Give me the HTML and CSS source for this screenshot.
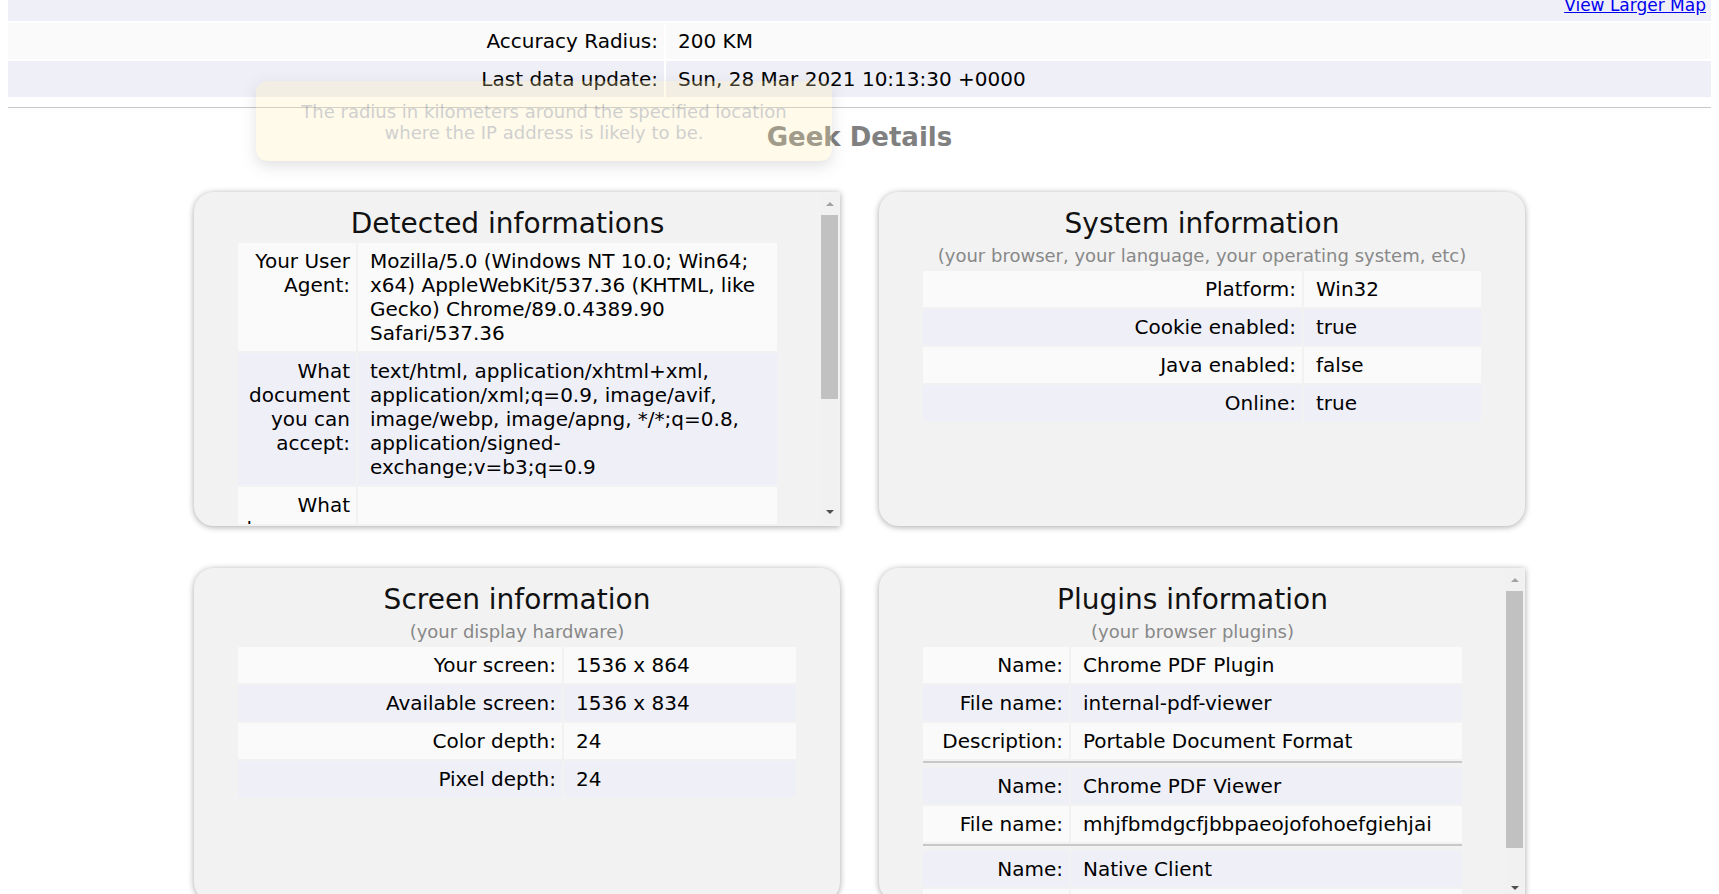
FILE: index.html
```html
<!DOCTYPE html>
<html lang="en">
<head>
<meta charset="utf-8">
<title>Geek Details</title>
<link rel="stylesheet" href="styles.css">
</head>
<body>
<div class="map-band"><a href="#" class="map-link">View Larger Map</a></div>
<table class="info-table top-table">
  <tr class="light"><th class="w-top">Accuracy Radius:</th><td>200 KM</td></tr>
  <tr class="alt"><th>Last data update:</th><td>Sun, 28 Mar 2021 10:13:30 +0000</td></tr>
</table>
<div class="tooltip">The radius in kilometers around the specified location where the IP address is likely to be.</div>
<hr class="rule">
<h2 class="geek-title">Geek Details</h2>
<div class="cards">
  <section class="card card-scroll">
    <div class="card-body">
      <h3 class="card-title">Detected informations</h3>
      <table class="info-table">
        <tr class="light"><th class="w-detected">Your User Agent:</th><td>Mozilla/5.0 (Windows NT 10.0; Win64; x64) AppleWebKit/537.36 (KHTML, like Gecko) Chrome/89.0.4389.90 Safari/537.36</td></tr>
        <tr class="alt"><th>What document you can accept:</th><td>text/html, application/xhtml+xml, application/xml;q=0.9, image/avif, image/webp, image/apng, */*;q=0.8, application/signed-exchange;v=b3;q=0.9</td></tr>
        <tr class="light"><th>What languages do you accept:</th><td>en-US,en;q=0.9</td></tr>
        <tr class="alt"><th>What encoding do you accept:</th><td>gzip, deflate, br</td></tr>
      </table>
    </div>
    <div class="scrollbar">
      <div class="sb-btn"><svg width="8" height="4" viewBox="0 0 8 4"><polygon points="0,4 4,0 8,4" fill="#a3a3a3"/></svg></div>
      <div class="sb-track"><div class="sb-thumb thumb-detected"></div></div>
      <div class="sb-btn sb-btn-down"><svg width="8" height="4" viewBox="0 0 8 4"><polygon points="0,0 8,0 4,4" fill="#505050"/></svg></div>
    </div>
  </section>
  <section class="card">
    <div class="card-body">
      <h3 class="card-title">System information</h3>
      <p class="card-sub">(your browser, your language, your operating system, etc)</p>
      <table class="info-table">
        <tr class="light"><th class="w-system">Platform:</th><td>Win32</td></tr>
        <tr class="alt"><th>Cookie enabled:</th><td>true</td></tr>
        <tr class="light"><th>Java enabled:</th><td>false</td></tr>
        <tr class="alt"><th>Online:</th><td>true</td></tr>
      </table>
    </div>
  </section>
  <section class="card">
    <div class="card-body">
      <h3 class="card-title">Screen information</h3>
      <p class="card-sub">(your display hardware)</p>
      <table class="info-table">
        <tr class="light"><th class="w-screen">Your screen:</th><td>1536 x 864</td></tr>
        <tr class="alt"><th>Available screen:</th><td>1536 x 834</td></tr>
        <tr class="light"><th>Color depth:</th><td>24</td></tr>
        <tr class="alt"><th>Pixel depth:</th><td>24</td></tr>
      </table>
    </div>
  </section>
  <section class="card card-scroll">
    <div class="card-body">
      <h3 class="card-title">Plugins information</h3>
      <p class="card-sub">(your browser plugins)</p>
      <table class="info-table">
        <tr class="light"><th class="w-plugins">Name:</th><td>Chrome PDF Plugin</td></tr>
        <tr class="alt"><th>File name:</th><td>internal-pdf-viewer</td></tr>
        <tr class="light"><th>Description:</th><td>Portable Document Format</td></tr>
        <tr class="sep"><td colspan="2"></td></tr>
        <tr class="alt"><th>Name:</th><td>Chrome PDF Viewer</td></tr>
        <tr class="light"><th>File name:</th><td>mhjfbmdgcfjbbpaeojofohoefgiehjai</td></tr>
        <tr class="sep"><td colspan="2"></td></tr>
        <tr class="alt"><th>Name:</th><td>Native Client</td></tr>
        <tr class="light"><th>File name:</th><td>internal-nacl-plugin</td></tr>
      </table>
    </div>
    <div class="scrollbar">
      <div class="sb-btn"><svg width="8" height="4" viewBox="0 0 8 4"><polygon points="0,4 4,0 8,4" fill="#a3a3a3"/></svg></div>
      <div class="sb-track"><div class="sb-thumb thumb-plugins"></div></div>
      <div class="sb-btn sb-btn-down"><svg width="8" height="4" viewBox="0 0 8 4"><polygon points="0,0 8,0 4,4" fill="#505050"/></svg></div>
    </div>
  </section>
</div>
</body>
</html>
```
FILE: styles.css
```css
html {
  overflow: hidden;
}

body {
  margin: 0 8px;
  position: relative;
  background: #ffffff;
  color: #000000;
  font-family: "DejaVu Sans", Verdana, sans-serif;
}

/* ---------- top location block ---------- */
.map-band {
  height: 21px;
  background: #efeff8;
  overflow: hidden;
  display: flex;
  justify-content: flex-end;
  align-items: flex-end;
  padding-right: 5px;
}

.map-link {
  font-size: 17px;
  line-height: 17px;
  margin-bottom: 7px;
  color: #0000ee;
  text-decoration: underline;
}

.info-table {
  width: 100%;
  table-layout: fixed;
  border-spacing: 2px;
  font-size: 20px;
  line-height: 24px;
}

.top-table {
  width: calc(100% + 4px);
  margin: 0 -2px;
}

.info-table th,
.info-table td {
  box-sizing: border-box;
  padding: 6px 6px 6px 12px;
  text-align: left;
  vertical-align: middle;
}

.info-table th {
  padding: 6px 6px 6px 8px;
  text-align: right;
  font-weight: normal;
  vertical-align: top;
}

.light th,
.light td {
  background: #fafafa;
}

.alt th,
.alt td {
  background: #efeff8;
}

.sep td {
  height: 5px;
  padding: 0;
  border-top: 2px solid #c8c8c8;
  background: transparent;
}

.w-top { width: 656px; }
.w-detected { width: 118px; }
.w-system { width: 379px; }
.w-screen { width: 324px; }
.w-plugins { width: 146px; }

/* ---------- tooltip (fading) ---------- */
.tooltip {
  position: absolute;
  top: 81px;
  left: 248px;
  width: 576px;
  height: 80px;
  box-sizing: border-box;
  padding: 20px 34px 0;
  border-radius: 12px;
  background: #ffeeaa;
  color: #444444;
  font-size: 18px;
  line-height: 21px;
  text-align: center;
  opacity: 0.25;
  box-shadow: 0 5px 14px rgba(0, 0, 0, 0.45);
}

.rule {
  height: 0;
  margin: 8px -8px 0;
  border: 0;
  border-top: 1px solid #c8c8c8;
}

.geek-title {
  margin: 15px 0 0;
  font-size: 26px;
  line-height: 29px;
  font-weight: bold;
  color: #808080;
  text-align: center;
}

/* ---------- cards ---------- */
.cards {
  display: grid;
  grid-template-columns: repeat(2, 646px);
  justify-content: center;
  column-gap: 39px;
  row-gap: 42px;
  margin-top: 40px;
}

.card {
  display: flex;
  height: 334px;
  box-sizing: border-box;
  border: 2px solid #f2f2f2;
  border-radius: 20px;
  background: #f2f2f2;
  box-shadow: 0 1px 6px rgba(0, 0, 0, 0.35);
  overflow: hidden;
}

.card-scroll {
  border-radius: 20px 0 0 20px;
}

.card-body {
  flex: 1;
  min-width: 0;
  overflow: hidden;
  padding: 12px 40px 20px;
}

.card-scroll .card-body {
  padding-right: 42px;
}

.card-title {
  margin: 0;
  padding-top: 1px;
  font-size: 28px;
  line-height: 34px;
  font-weight: normal;
  text-align: center;
  color: #111111;
}

.card-sub {
  margin: 0;
  padding-top: 2px;
  font-size: 18px;
  line-height: 26px;
  color: #888888;
  text-align: center;
}

/* ---------- scrollbars ---------- */
.scrollbar {
  flex: 0 0 17px;
  display: flex;
  flex-direction: column;
  background: #f1f1f1;
}

.sb-btn {
  flex: 0 0 21px;
  display: flex;
  justify-content: center;
  align-items: flex-start;
  padding-top: 8px;
  box-sizing: border-box;
}

.sb-btn-down {
  padding-top: 7px;
}

.sb-btn svg {
  display: block;
}

.sb-track {
  flex: 1;
}

.sb-thumb {
  background: #c1c1c1;
}

.thumb-detected { height: 184px; }
.thumb-plugins { height: 257px; }
```
